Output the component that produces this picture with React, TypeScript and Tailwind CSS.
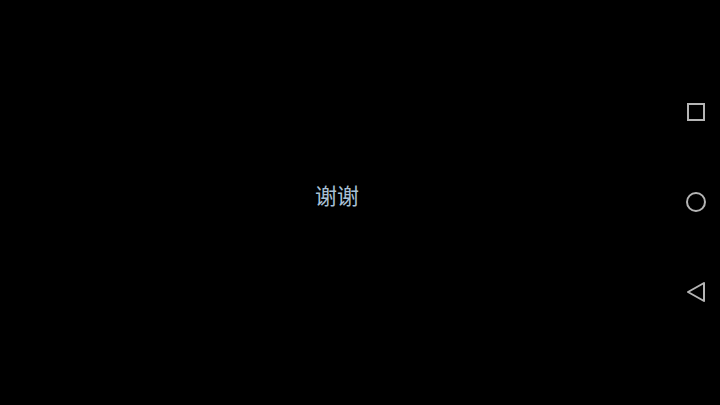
export default function App() {
  return (
    <div className="flex h-[405px] w-[720px] bg-black">
      <div className="flex flex-1 items-center justify-center pb-[18px] pl-[2px]">
        <span className="text-[22px] leading-none text-[#a8c0d6] [font-family:'Noto_Sans_CJK_SC',sans-serif]">
          谢谢
        </span>
      </div>
      <div className="flex w-[48px] flex-col items-center justify-between py-[102px]">
        <svg width="20" height="20" viewBox="0 0 20 20" className="mb-[-4px]">
          <rect x="2" y="2" width="16" height="16" fill="none" stroke="#b5b5b5" strokeWidth="2" />
        </svg>
        <svg width="22" height="22" viewBox="0 0 22 22" className="mt-[4px]">
          <circle cx="11" cy="11" r="9" fill="none" stroke="#b5b5b5" strokeWidth="2" />
        </svg>
        <svg width="20" height="22" viewBox="0 0 20 22">
          <path d="M18 2 L2 11 L18 20 Z" fill="none" stroke="#b5b5b5" strokeWidth="2" strokeLinejoin="round" />
        </svg>
      </div>
    </div>
  );
}
